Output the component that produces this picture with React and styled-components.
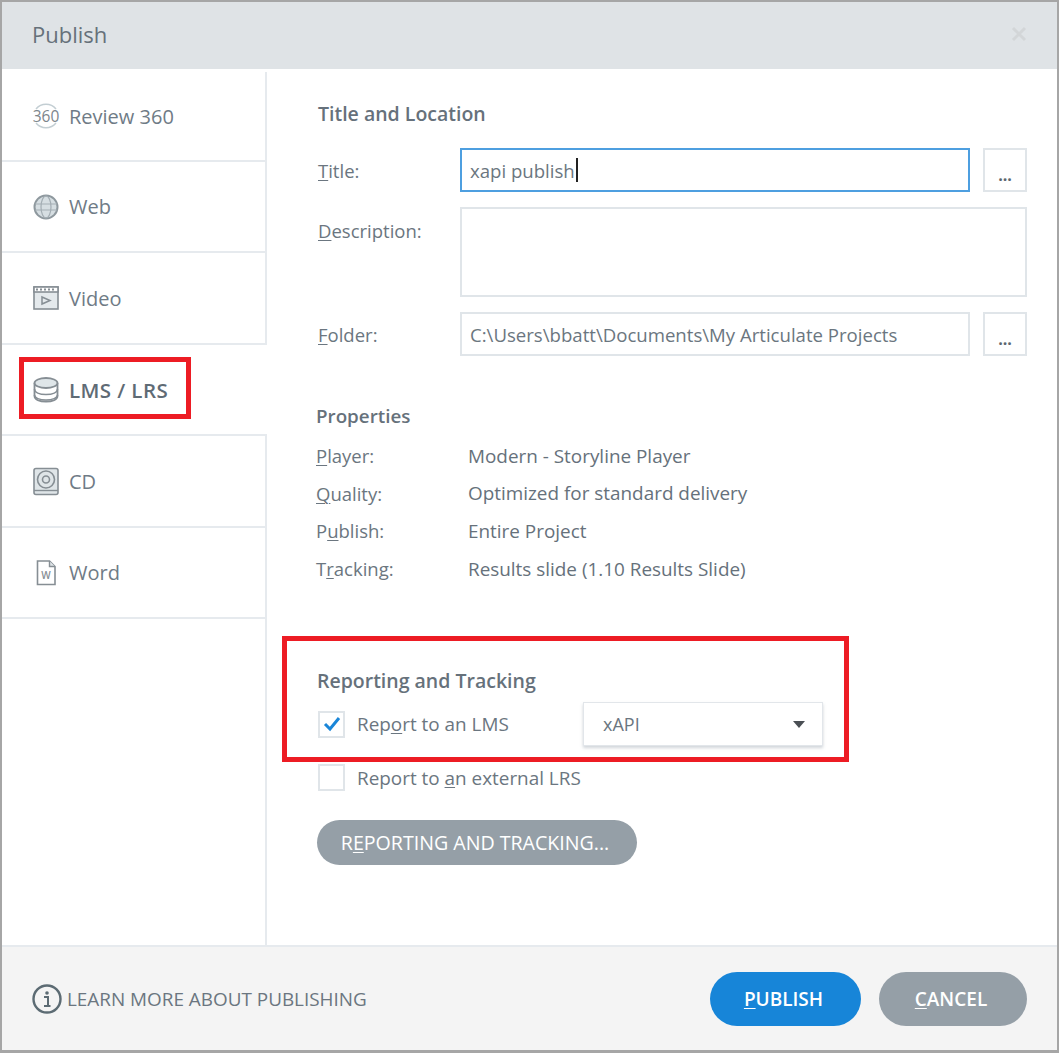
import { Fragment } from "react";
import styled, { createGlobalStyle } from "styled-components";

const GlobalStyle = createGlobalStyle`
    html, body {
        margin: 0;
        padding: 0;
        background: #fff;
    }
    * {
        box-sizing: border-box;
    }
`;

const Dialog = styled.div`
    position: relative;
    display: flex;
    flex-direction: column;
    width: 1059px;
    height: 1053px;
    border: 2px solid #a6a6a6;
    border-bottom-width: 3px;
    font-family: "Open Sans", "Noto Sans", sans-serif;
    font-size: 18px;
    color: #6b7680;
    background: #fff;
`;

const Header = styled.header`
    display: flex;
    align-items: center;
    justify-content: space-between;
    flex: 0 0 67px;
    padding: 0 30px 4px 30px;
    background: #dfe3e6;
    font-size: 22px;
    color: #66717a;
`;

const CloseIcon = styled.svg`
    width: 16px;
    height: 16px;
`;

const Body = styled.div`
    display: flex;
    flex: 1;
    min-height: 0;
`;

const Sidebar = styled.nav`
    display: flex;
    flex-direction: column;
    width: 265px;
    border-right: 2px solid #e6eaee;
    margin-top: 3px;
`;

const Tab = styled.div`
    display: flex;
    align-items: center;
    gap: 10px;
    flex: 0 0 91.5px;
    width: ${(props) => (props.$active ? "265px" : "auto")};
    padding: 1px 0 0 31px;
    border-bottom: 2px solid #e6eaee;
    font-size: ${(props) => (props.$active ? "20.5px" : "20px")};
    font-weight: ${(props) => (props.$active ? 600 : 400)};
    letter-spacing: ${(props) => (props.$active ? "0.4px" : "0")};
    color: ${(props) => (props.$active ? "#5f6b75" : "#6f7b86")};
    background: #fff;
    margin-right: ${(props) => (props.$active ? "-2px" : 0)};

    &:first-child {
        flex-basis: 89.5px;
    }
`;

const TabIcon = styled.svg`
    flex: 0 0 26px;
    width: 26px;
    height: 28px;
    overflow: visible;
`;

const Main = styled.main`
    flex: 1;
    display: flex;
    flex-direction: column;
    padding: 32px 30px 0 50px;
`;

const Heading = styled.h2`
    margin: 0;
    font-size: ${(props) => props.$size || 19.5}px;
    line-height: 26px;
    font-weight: 600;
    color: #66717b;
    margin-left: ${(props) => props.$shift || 0}px;
`;

const FormGrid = styled.div`
    display: grid;
    grid-template-columns: 142px 510px 57px;
    row-gap: 15px;
    margin: 21px 0 0 1px;
`;

const FieldLabel = styled.label`
    height: 44px;
    line-height: ${(props) => (props.$top ? "48px" : "46px")};
    font-size: 18.5px;
`;

const Field = styled.div`
    display: flex;
    align-items: center;
    grid-column: ${(props) => (props.$wide ? "2 / span 2" : "auto")};
    height: ${(props) => props.$height || 44}px;
    padding: 0 8px;
    border: 2px solid ${(props) => (props.$focus ? "#4d9fe0" : "#e0e5e9")};
    font-size: 18.6px;
    color: #6b7680;
    white-space: nowrap;
    overflow: hidden;
`;

const Caret = styled.span`
    display: inline-block;
    width: 2px;
    height: 24px;
    margin-left: 1px;
    background: #222;
`;

const BrowseButton = styled.div`
    display: flex;
    align-items: center;
    justify-content: center;
    justify-self: end;
    width: 44px;
    height: 44px;
    padding-top: 10px;
    border: 2px solid #e0e5e9;
    font-size: 16px;
    font-weight: 700;
    color: #5c6670;
`;

const Properties = styled.section`
    margin-top: 47px;
    margin-left: -1px;
`;

const PropertyList = styled.dl`
    display: grid;
    grid-template-columns: 152px 1fr;
    grid-auto-rows: 37.6px;
    align-items: center;
    margin: 8px 0 0;
`;

const PropertyName = styled.dt`
    font-size: 18.5px;
`;

const PropertyValue = styled.dd`
    margin: 0;
    font-size: 18.9px;
    color: #66717b;
`;

const Reporting = styled.section`
    margin-top: 81px;
`;

const CheckRow = styled.div`
    display: flex;
    align-items: center;
    height: ${(props) => props.$height}px;
    margin-top: ${(props) => props.$gap || 0}px;
`;

const CheckBox = styled.span`
    display: flex;
    align-items: center;
    justify-content: center;
    flex: 0 0 27px;
    width: 27px;
    height: 27px;
    margin-left: 1px;
    border: 2px solid #e0e5e9;
`;

const CheckText = styled.span`
    width: 226px;
    margin-left: 12px;
    font-size: 18.9px;
    white-space: nowrap;
`;

const Select = styled.div`
    display: flex;
    align-items: center;
    justify-content: space-between;
    width: 240px;
    height: 44px;
    padding: 0 17px 0 19px;
    border: 1px solid #e2e6ea;
    box-shadow: 0 2px 3px rgba(120, 135, 150, 0.35);
    font-size: 18px;
`;

const Arrow = styled.span`
    width: 0;
    height: 0;
    border-left: 6px solid transparent;
    border-right: 6px solid transparent;
    border-top: 7px solid #4a4f54;
`;

const PillButton = styled.div`
    display: flex;
    align-items: center;
    justify-content: center;
    width: ${(props) => props.$width}px;
    height: ${(props) => props.$height}px;
    padding: 0 4px 1px 0;
    border-radius: 999px;
    background: ${(props) => props.$bg || "#959fa7"};
    color: #fff;
    font-size: 19px;
    font-weight: 600;
    white-space: nowrap;
`;

const ReportingButton = styled(PillButton)`
    margin-top: 29px;
    font-weight: 400;
    font-size: 19.6px;
`;

const Footer = styled.footer`
    display: flex;
    align-items: center;
    justify-content: space-between;
    flex: 0 0 105px;
    padding: 1px 30px 0 30px;
    background: #f4f4f4;
    border-top: 2px solid #e6eaee;
`;

const LearnMore = styled.div`
    display: flex;
    align-items: center;
    gap: 5px;
    font-size: 18.9px;
    color: #6b7680;
`;

const FooterButtons = styled.div`
    display: flex;
    gap: 18px;
`;

const Callout = styled.div`
    position: absolute;
    left: ${(props) => props.$x}px;
    top: ${(props) => props.$y}px;
    width: ${(props) => props.$w}px;
    height: ${(props) => props.$h}px;
    border: 5px solid #ed1c24;
    pointer-events: none;
`;

const Key = styled.span`
    text-decoration: underline;
    text-underline-offset: 2px;
    text-decoration-thickness: 1px;
`;

function ReviewIcon() {
    return (
        <TabIcon viewBox="0 0 26 28">
            <path d="M3 7 A13 13 0 0 1 23 7 M23 21 A13 13 0 0 1 3 21" fill="none" stroke="#c3ced3" strokeWidth="1.5" />
            <text x="13" y="19.5" textAnchor="middle" fontSize="15.5" fontFamily="Open Sans" fill="#7d868c">360</text>
        </TabIcon>
    );
}

function WebIcon() {
    return (
        <TabIcon viewBox="0 0 26 28">
            <circle cx="13" cy="14" r="11.5" fill="#d6dee2" stroke="#8e989e" strokeWidth="2" />
            <ellipse cx="13" cy="14" rx="5" ry="11" fill="none" stroke="#a3adb3" strokeWidth="1.2" />
            <path d="M2 11 H24 M2 17 H24" stroke="#a3adb3" strokeWidth="1.2" />
        </TabIcon>
    );
}

function VideoIcon() {
    return (
        <TabIcon viewBox="0 0 26 28">
            <rect x="1" y="3" width="24" height="22" fill="#e4e9ec" stroke="#868e94" strokeWidth="1.6" />
            <rect x="1" y="3" width="24" height="5" fill="#fff" stroke="#868e94" strokeWidth="1.6" />
            <path d="M3 5.5 H23" stroke="#868e94" strokeWidth="2" strokeDasharray="2 2" />
            <path d="M9 13 L17 16.5 L9 20 Z" fill="none" stroke="#868e94" strokeWidth="1.5" />
        </TabIcon>
    );
}

function DatabaseIcon() {
    return (
        <TabIcon viewBox="0 0 26 28">
            <path d="M1.5 7 V20 C1.5 23.5 6.5 25.5 13 25.5 S24.5 23.5 24.5 20 V7" fill="#fff" stroke="#868e94" strokeWidth="1.8" />
            <ellipse cx="13" cy="7" rx="11.5" ry="5" fill="#dfe6e9" stroke="#868e94" strokeWidth="1.8" />
            <path d="M1.5 13 C1.5 16.5 6.5 18.5 13 18.5 S24.5 16.5 24.5 13 M1.5 19 C1.5 22 6.5 24 13 24 S24.5 22 24.5 19" fill="none" stroke="#868e94" strokeWidth="1.6" />
        </TabIcon>
    );
}

function CdIcon() {
    return (
        <TabIcon viewBox="0 0 26 28">
            <rect x="1" y="1.5" width="24" height="26" rx="2" fill="#dfe5e8" stroke="#868e94" strokeWidth="1.6" />
            <path d="M1 23.5 H25" stroke="#868e94" strokeWidth="1.4" />
            <circle cx="13" cy="12.5" r="8.5" fill="none" stroke="#868e94" strokeWidth="1.6" />
            <circle cx="13" cy="12.5" r="3.5" fill="none" stroke="#868e94" strokeWidth="1.6" />
        </TabIcon>
    );
}

function WordIcon() {
    return (
        <TabIcon viewBox="0 0 26 28">
            <path d="M4.5 2 H16.5 L22 7.5 V25.5 H4.5 Z" fill="#fff" stroke="#868e94" strokeWidth="1.6" />
            <path d="M16.5 2 V7.5 H22" fill="#dfe5e8" stroke="#868e94" strokeWidth="1.4" />
            <text x="13" y="20" textAnchor="middle" fontSize="10" fontWeight="600" fontFamily="Open Sans" fill="#868e94">W</text>
        </TabIcon>
    );
}

const tabs = [
    { name: "Review 360", icon: <ReviewIcon /> },
    { name: "Web", icon: <WebIcon /> },
    { name: "Video", icon: <VideoIcon /> },
    { name: "LMS / LRS", icon: <DatabaseIcon />, active: true },
    { name: "CD", icon: <CdIcon /> },
    { name: "Word", icon: <WordIcon /> },
];

const properties = [
    { id: "player", label: <><Key>P</Key>layer:</>, value: "Modern - Storyline Player" },
    { id: "quality", label: <><Key>Q</Key>uality:</>, value: "Optimized for standard delivery" },
    { id: "publish", label: <>P<Key>u</Key>blish:</>, value: "Entire Project" },
    { id: "tracking", label: <>T<Key>r</Key>acking:</>, value: "Results slide (1.10 Results Slide)" },
];

function App() {
    return (
        <>
            <GlobalStyle />
            <Dialog>
                <Header>
                    <span>Publish</span>
                    <CloseIcon viewBox="0 0 16 16">
                        <path d="M2 2 L14 14 M14 2 L2 14" stroke="#d3d6d8" strokeWidth="3" />
                    </CloseIcon>
                </Header>
                <Body>
                    <Sidebar>
                        {tabs.map((tab) => (
                            <Tab key={tab.name} $active={tab.active}>
                                {tab.icon}
                                {tab.name}
                            </Tab>
                        ))}
                    </Sidebar>
                    <Main>
                        <Heading $shift={1}>Title and Location</Heading>
                        <FormGrid>
                            <FieldLabel><Key>T</Key>itle:</FieldLabel>
                            <Field $focus>xapi publish<Caret /></Field>
                            <BrowseButton>...</BrowseButton>
                            <FieldLabel $top><Key>D</Key>escription:</FieldLabel>
                            <Field $wide $height={90} />
                            <FieldLabel><Key>F</Key>older:</FieldLabel>
                            <Field>C:\Users\bbatt\Documents\My Articulate Projects</Field>
                            <BrowseButton>...</BrowseButton>
                        </FormGrid>
                        <Properties>
                            <Heading $size={18.8}>Properties</Heading>
                            <PropertyList>
                                {properties.map((row) => (
                                    <Fragment key={row.id}>
                                        <PropertyName>{row.label}</PropertyName>
                                        <PropertyValue>{row.value}</PropertyValue>
                                    </Fragment>
                                ))}
                            </PropertyList>
                        </Properties>
                        <Reporting>
                            <Heading>Reporting and Tracking</Heading>
                            <CheckRow $height={44} $gap={8}>
                                <CheckBox>
                                    <svg width="20" height="18" viewBox="0 0 20 18">
                                        <path d="M3 9 L8 14 L17 3" fill="none" stroke="#1a86d8" strokeWidth="3" />
                                    </svg>
                                </CheckBox>
                                <CheckText>Rep<Key>o</Key>rt to an LMS</CheckText>
                                <Select>
                                    xAPI
                                    <Arrow />
                                </Select>
                            </CheckRow>
                            <CheckRow $height={27} $gap={18}>
                                <CheckBox />
                                <CheckText>Report to <Key>a</Key>n external LRS</CheckText>
                            </CheckRow>
                            <ReportingButton $width={320} $height={45}>
                                <span>R<Key>E</Key>PORTING AND TRACKING...</span>
                            </ReportingButton>
                        </Reporting>
                    </Main>
                </Body>
                <Footer>
                    <LearnMore>
                        <svg width="30" height="30" viewBox="0 0 30 30">
                            <circle cx="15" cy="15" r="13.5" fill="none" stroke="#5c6b73" strokeWidth="2.4" />
                            <circle cx="15" cy="9" r="1.8" fill="#5c6b73" />
                            <path d="M12 13 H16 V21 M12 22 H18.5" fill="none" stroke="#5c6b73" strokeWidth="2" />
                        </svg>
                        LEARN MORE ABOUT PUBLISHING
                    </LearnMore>
                    <FooterButtons>
                        <PillButton $width={151} $height={54} $bg="#1785d8"><span><Key>P</Key>UBLISH</span></PillButton>
                        <PillButton $width={148} $height={54}><span><Key>C</Key>ANCEL</span></PillButton>
                    </FooterButtons>
                </Footer>
                <Callout $x={17} $y={355} $w={172} $h={62} />
                <Callout $x={280} $y={634} $w={567} $h={126} />
            </Dialog>
        </>
    );
}

export default App;
